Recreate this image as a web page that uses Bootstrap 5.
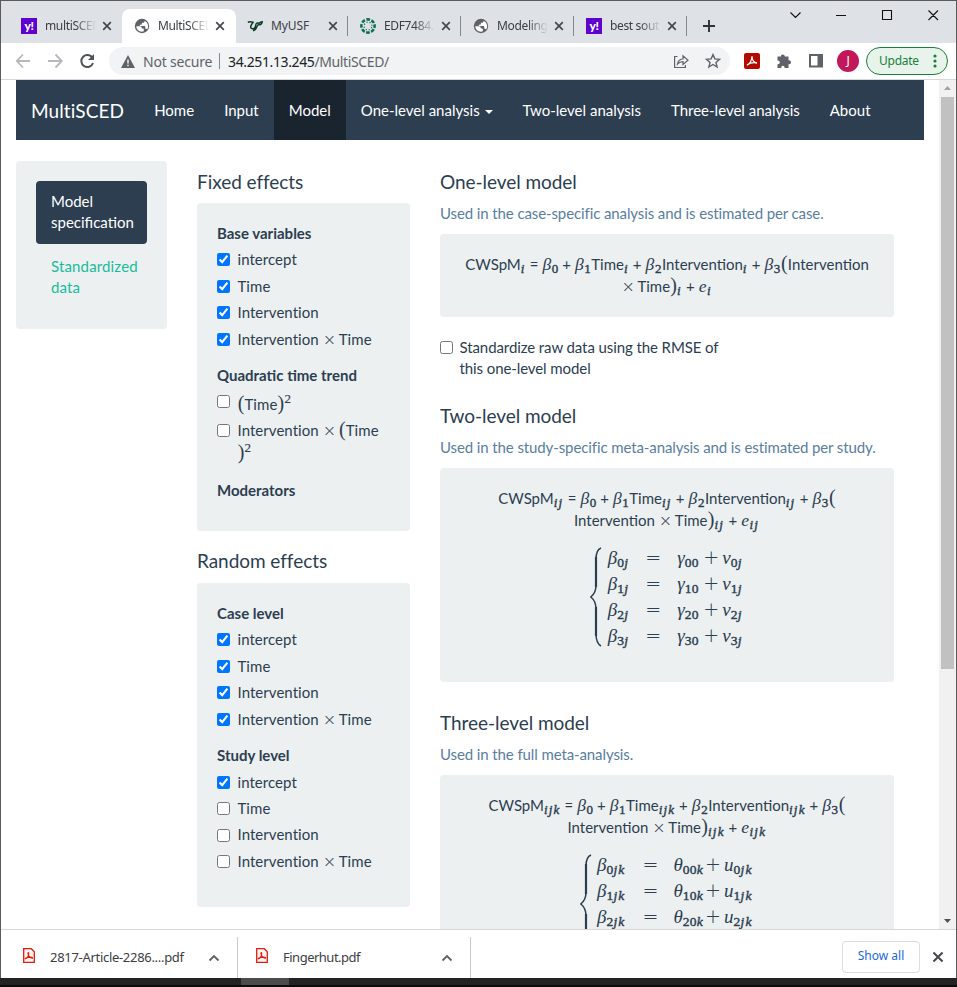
<!DOCTYPE html>
<html lang="en">
<head>
<meta charset="utf-8">
<title>MultiSCED</title>
<link rel="stylesheet" href="https://cdn.jsdelivr.net/npm/bootstrap@5.3.0/dist/css/bootstrap.min.css">
<style>
body{height:987px;overflow:hidden;background:#fff;font-family:"Noto Sans","Open Sans",sans-serif;font-size:12px;color:#3c4043}
svg{display:block;flex:none}
.win{height:978px;border:1px solid #5a5a5a;border-bottom:0}
.strip{height:42px;background:#dee1e6;padding-left:8px;flex:none}
.tab{width:113px;height:34px;padding-left:12px;margin-top:8px;position:relative}
.tab .ttl{width:51px;margin-left:8px;overflow:hidden;white-space:nowrap;letter-spacing:-.35px;-webkit-mask-image:linear-gradient(90deg,#000 60%,transparent);mask-image:linear-gradient(90deg,#000 60%,transparent)}
.tab .ttl.full{-webkit-mask-image:none;mask-image:none;letter-spacing:-.1px}
.tab .cls{margin-left:6px}
.tab.sep::after{content:"";position:absolute;right:0;top:7px;width:1px;height:20px;background:#85888c}
.tab.on{background:#fff;border-radius:8px 8px 0 0;width:114px;margin-right:-1px;padding-left:12px}
.fav-y{width:16px;height:16px;background:#5f01d1;color:#fff;font:900 12px/15px Lato,sans-serif;letter-spacing:-.3px;text-align:center;flex:none}
.tools{height:36px;background:#fff;flex:none;padding:0 8px 0 15px}
.omni{width:622px;height:28px;border-radius:14px;background:#f1f3f4;margin-left:13px;padding:0 9px 0 12px;font-size:14px;color:#5f6368}
.omni .ns{letter-spacing:-.2px;margin-left:8px;width:68px;white-space:nowrap}
.omni .bar{width:1px;height:16px;background:#85888c;margin:0 8px}
.omni .url{letter-spacing:-.38px;white-space:nowrap}
.omni .url b{font-weight:400;color:#202124}
.ava{width:22px;height:22px;background:#c2185b;color:#fff;font-size:12px;line-height:22px;text-align:center;margin-left:13px}
.upd{width:82px;height:28px;border:1.5px solid #188038;border-radius:14px;background:#e8f3ec;color:#188038;margin-left:7px;padding:0 10px 0 12px;letter-spacing:-.3px}
.view{height:850px;border-top:1px solid #d5d7d9;overflow:hidden;flex:none;font-family:Lato,sans-serif;font-size:15px;line-height:21.43px;color:#2c3e50}
.page{width:938px;padding-left:15px;height:849px;overflow:hidden}
.sbar{width:17px;background:#f1f1f1;padding:6px 2px 6px 2px}
.sbar .thumb{width:13px;height:572px;background:#c1c1c1;margin-top:7px}
.topnav{width:908px;height:60px;background:#2c3e50;color:#fff}
.topnav a{color:#fff;text-decoration:none;padding:19.5px 15px;height:60px;white-space:nowrap}
.topnav a.brandname{font-size:19px;padding-left:15px;padding-right:15px;letter-spacing:.1px}
.topnav a.cur{background:#1a242f}
.caret{display:inline-block;border:4px solid transparent;border-top-color:#fff;border-bottom:0;vertical-align:middle;margin-left:1px}
.cols{padding-top:21px;gap:30px}
.well{background:#ecf0f1;border-radius:4px;padding:20px}
.side{width:151px;height:168px}
.side a{display:block;padding:10px 15px;text-decoration:none;color:#18bc9c;border-radius:4px;margin-bottom:2px;letter-spacing:.15px}
.side a.cur{background:#2c3e50;color:#fff;padding-right:10px;letter-spacing:0}
.left{width:213px}
.right{width:454px}
.ttl4{font-size:19px;line-height:21px;font-weight:400;margin:10px 0 11px;letter-spacing:-.05px}
.hlp{color:#597ea2;margin-bottom:9.6px;letter-spacing:-.105px}
.std{letter-spacing:-.09px}
.grp{font-weight:700;height:21.4px;margin-bottom:2.4px}
.grp.nx{margin-top:12.8px}
.ck{display:flex;height:26.43px;align-items:center;letter-spacing:.05px}
.ck input,.std input{width:13px;height:13px;margin:0 7.5px 0 0;flex:none}
.std input{margin-right:6.5px}
.ck span.lb{white-space:nowrap}
.ck.q1{height:29px;align-items:flex-start;padding-top:5px}
.ck.q2{height:50px;align-items:flex-start;padding-top:1px;line-height:23px}
.ck.q1 input{margin-top:.5px}.ck.q2 input{margin-top:5px}
.tm{font-family:"DejaVu Sans","Liberation Serif",serif;font-weight:200;font-size:16px;display:inline-block;width:12px;text-align:center;margin:0 4px;line-height:1}
.pr{font-family:"Liberation Serif",serif;font-size:20px;display:inline-block;width:7px;text-align:center;line-height:15px}
.ex{font-family:"Liberation Serif",serif;font-size:13px;position:relative;top:-7px;line-height:1;-webkit-text-stroke:.2px}
.fx{text-align:center;white-space:nowrap}
.fx div{height:22px;line-height:22px}
.fx div:first-child{margin-top:-1px}
.fx i,.mx i{font-family:"Liberation Serif",serif;font-size:17.5px;display:inline-block;line-height:1}
.fx i.b{width:10px}.fx i.e{width:9px;text-align:center}
.fx sub,.mx sub{font-family:"Liberation Serif",serif;font-size:13px;-webkit-text-stroke:.4px;bottom:auto;top:3px;line-height:0;display:inline-block;vertical-align:baseline;text-align:left}
.fx sub.n{width:7px}
.fx sub.x1{width:5.5px}.fx sub.x2{width:10.5px}.fx sub.x3{width:17px}
.fx sub[class^=x],.mx sub em{font-style:italic;letter-spacing:1.2px}
.op{display:inline-block;width:15.5px;text-align:center}
.mx{display:grid;grid-auto-rows:26px;line-height:26px;white-space:nowrap;align-items:center}
.mx i{font-size:19px}.mx sub{font-size:13.5px;letter-spacing:.2px}
.mx .o{font-family:"DejaVu Sans",sans-serif;font-weight:200;font-size:19px;text-align:left;line-height:1;margin-left:-1px}
.dl{height:48px;flex:none;border-top:1px solid #d5d7d9;font-size:13px}
.dl .itm{height:41px;margin-top:7px;border-right:1px solid #c8cacc;padding-right:17px;letter-spacing:-.3px}
.dl .itm+.itm{letter-spacing:-.5px}
.shall{width:78px;height:32px;border:1px solid #dadce0;border-radius:4px;color:#1a67e0;font-size:12px;line-height:28px;text-align:center}
.task{height:9px;background:#232323;border-bottom:2px solid #0c0c0c}
.task div{height:7px;flex:none}
</style>
<script src="https://cdn.jsdelivr.net/npm/bootstrap@5.3.0/dist/js/bootstrap.bundle.min.js"></script>
</head>
<body>
<svg width="0" height="0" class="position-absolute">
<symbol id="x" viewBox="0 0 10 10"><path d="M1.200 1.200l7.600 7.600M8.800 1.200L1.200 8.800" stroke="#45494d" stroke-width="1.700" fill="none"/></symbol>
<symbol id="globe" viewBox="0 0 16 16"><circle cx="8" cy="8" r="7.200" fill="#5f6368"/><path d="M2.400 8.200h3.400c1.500 0 2 .8 2 1.900h1.300c.6 0 .9.400.9 1v1.200c0 .7-.6 1.300-1.900 1.400C4.800 13.700 2.300 11.200 2.400 8.200zM7.200 2.500h3.300v.900c0 .8-.6 1.300-1.300 1.300H8v1.200c0 .6-.4 1-1 1H6v1.300h4.300c.8 0 1.200.5 1.200 1.200v.9h.9c1.300-2.200 1.200-4.700-.3-6.300" fill="none"/><path d="M2.300 8.300H6c1.200 0 1.700.8 1.700 1.600v.7h1.100c.6 0 1 .4 1 1v1.700c-.6.300-1.200.4-1.800.4-3.200 0-5.700-2.400-5.700-5.400zM10.600 2.900c0 1.200-.7 1.800-1.600 1.800H7.900v1c0 .7-.5 1.100-1.200 1.100H5.800v1.300h4.300c.8 0 1.200.5 1.200 1.200v1.500h.8c.5 0 .9.300 1.100.700.7-1 1-2.100.9-3.400-.1-2.300-1.400-4.300-3.400-5.200z" fill="#fff"/></symbol>
<symbol id="pdf" viewBox="0 0 12 15"><path d="M.7.7h7.600L11.300 3.700v10.600H.7z" fill="#fff5f4" stroke="#e8190c" stroke-width="1.300"/><path d="M2.500 10.800c1.500 0 3.500-3.500 3.200-5.600-.1-1-1.200-.6-.8.400.6 2 2.300 4.400 4.200 4.700.7 0 .6-1-.3-1.100-1.800-.3-4.200.2-5.900.9-.9.500-1 .9-.4.700z" fill="none" stroke="#e8190c" stroke-width="1.100"/></symbol>
</svg>
<div class="win d-flex flex-column">
  <div class="strip d-flex">
    <div class="tab d-flex align-items-center"><div class="fav-y">y!</div><div class="ttl">multiSCED</div><svg class="cls" width="10" height="10"><use href="#x"/></svg></div>
    <div class="tab on d-flex align-items-center"><svg width="16" height="16"><use href="#globe"/></svg><div class="ttl">MultiSCED</div><svg class="cls" width="10" height="10"><use href="#x"/></svg></div>
    <div class="tab sep d-flex align-items-center"><svg width="16" height="16" viewBox="0 0 16 16"><path d="M.8 4.200c1.800-.6 3.700-.4 5.200.1L4.500 6.600c-1.300 2-1 3.700.8 4.200 2.400.3 3.300-2.500 3.600-4.300.3-1.800 2-1.600 3.300-1.300.8-.9 1.800-1.300 3-1.400-.2 1.300-.8 2.200-1.800 2.900-1.600-.5-2.600 0-3.200 1.300C9.300 10.700 8 12.400 6 12.800" fill="none" stroke="#0b3b25" stroke-width="1.500"/></svg><div class="ttl full">MyUSF</div><svg class="cls" width="10" height="10"><use href="#x"/></svg></div>
    <div class="tab sep d-flex align-items-center"><svg width="16" height="16" viewBox="0 0 16 16" fill="none" stroke="#0a7050"><circle cx="8" cy="8" r="6.600" stroke-width="2.600" stroke-dasharray="3.700 1.480" stroke-dashoffset="1.850"/><circle cx="8" cy="8" r="3.900" stroke-width="1.200" stroke-dasharray="1.100 1.960" stroke-dashoffset="2"/></svg><div class="ttl">EDF7484.</div><svg class="cls" width="10" height="10"><use href="#x"/></svg></div>
    <div class="tab sep d-flex align-items-center"><svg width="16" height="16"><use href="#globe"/></svg><div class="ttl">Modeling</div><svg class="cls" width="10" height="10"><use href="#x"/></svg></div>
    <div class="tab sep d-flex align-items-center"><div class="fav-y">y!</div><div class="ttl">best sout</div><svg class="cls" width="10" height="10"><use href="#x"/></svg></div>
    <svg width="14" height="14" style="margin:18px 0 0 15px" viewBox="0 0 14 14"><path d="M7 1v12M1 7h12" stroke="#303336" stroke-width="1.900"/></svg>
    <svg class="ms-auto" width="168" height="28" viewBox="788 1 168 28" fill="none" stroke="#111" stroke-width="1.100"><path d="M790.500 12.500l5 5 5-5M836 15.500h10M882.500 10.500h9v9h-9zM928.500 10.500l9.500 9.500M938 10.500l-9.500 9.500"/></svg>
  </div>
  <div class="tools d-flex align-items-center">
    <svg width="80" height="18" viewBox="16 52 80 18" fill="none" stroke-width="1.800"><path d="M30 61H17M23 54.500L16.800 61l6.200 6.500M48 61h13.500M55.500 54.500L61.800 61l-6.300 6.500" stroke="#b6b9bc"/><path d="M92.500 58a6 6 0 1 0 .5 5" stroke="#4f5357" stroke-width="2"/><path d="M94 54v6h-6z" fill="#4f5357"/></svg>
    <div class="omni d-flex align-items-center">
      <svg width="14" height="13" viewBox="0 0 14 13"><path d="M7 0l7 13H0z" fill="#5f6368"/><path d="M7 4.500v4M7 9.700v1.600" stroke="#f1f3f4" stroke-width="1.500"/></svg>
      <span class="ns">Not secure</span><span class="bar"></span><span class="url"><b>34.251.13.245</b>/MultiSCED/</span>
      <svg class="ms-auto" width="48" height="16" viewBox="0 0 48 16" fill="none" stroke="#5f6368" stroke-width="1.200"><path d="M4.500 3.500H1.600v11h10.800v-2.500M4.500 11c.5-3 2.300-5 5.500-5V2.800L15 7.200l-5 4.300V8.700c-2.500 0-4 .6-5.500 2.300z"/><path d="M40 1.600l1.900 4.300 4.600.4-3.500 3.100 1.100 4.600-4.100-2.500-4.100 2.500L37 9.400l-3.500-3.100 4.600-.4z" stroke-width="1.400"/></svg>
    </div>
    <svg style="margin-left:14px" width="80" height="16" viewBox="0 0 80 16"><rect width="16" height="16" rx="2" fill="#b30b00"/><path d="M3 12c2.500-.5 5-4.500 5-8.800C8 7 9.500 9.500 13 10 9.500 9.300 6 9.800 3 12z" fill="none" stroke="#fff" stroke-width="1.300"/><path d="M33.500 3.500h3.300a2 2 0 0 1 4 0h3.700v3.800h.6a1.900 1.900 0 0 1 0 3.900h-.6V15h-3.900v-.5a1.700 1.700 0 0 0-3.400 0v.5h-3.700v-3.800h.5a1.800 1.800 0 0 0 0-3.600h-.5z" fill="#5f6368"/><path d="M65 1h14v13.500H65zM67 3v9.500h6.500V3z" fill="#5f6368" fill-rule="evenodd"/></svg>
    <div class="ava rounded-circle">J</div>
    <div class="upd d-flex align-items-center justify-content-between"><span>Update</span><svg width="4" height="14" viewBox="0 0 4 14" fill="#188038"><circle cx="2" cy="2" r="1.600"/><circle cx="2" cy="7" r="1.600"/><circle cx="2" cy="12" r="1.600"/></svg></div>
  </div>
  <div class="view d-flex">
    <div class="page">
      <nav class="topnav d-flex">
        <a class="brandname" href="#">MultiSCED</a><a href="#">Home</a><a href="#">Input</a><a class="cur" href="#">Model</a><a href="#">One-level analysis <span class="caret"></span></a><a href="#">Two-level analysis</a><a href="#">Three-level analysis</a><a href="#">About</a>
      </nav>
      <div class="cols d-flex align-items-start">
        <div class="well side"><a class="cur" href="#">Model specification</a><a href="#">Standardized data</a></div>
        <div class="left">
          <h4 class="ttl4">Fixed effects</h4>
          <div class="well" style="height:328px">
            <div class="grp">Base variables</div>
            <label class="ck"><input type="checkbox" checked><span class="lb">intercept</span></label>
            <label class="ck"><input type="checkbox" checked><span class="lb">Time</span></label>
            <label class="ck"><input type="checkbox" checked><span class="lb">Intervention</span></label>
            <label class="ck"><input type="checkbox" checked><span class="lb">Intervention<span class="tm">×</span>Time</span></label>
            <div class="grp nx">Quadratic time trend</div>
            <label class="ck q1"><input type="checkbox"><span class="lb"><span class="pr">(</span>Time<span class="pr">)</span><span class="ex">2</span></span></label>
            <label class="ck q2"><input type="checkbox"><span class="lb">Intervention<span class="tm">×</span><span class="pr">(</span>Time<br><span class="pr">)</span><span class="ex">2</span></span></label>
            <div class="grp" style="margin-top:12px">Moderators</div>
          </div>
          <h4 class="ttl4" style="margin-top:19px;margin-bottom:12px">Random effects</h4>
          <div class="well" style="height:324px">
            <div class="grp">Case level</div>
            <label class="ck"><input type="checkbox" checked><span class="lb">intercept</span></label>
            <label class="ck"><input type="checkbox" checked><span class="lb">Time</span></label>
            <label class="ck"><input type="checkbox" checked><span class="lb">Intervention</span></label>
            <label class="ck"><input type="checkbox" checked><span class="lb">Intervention<span class="tm">×</span>Time</span></label>
            <div class="grp nx">Study level</div>
            <label class="ck"><input type="checkbox" checked><span class="lb">intercept</span></label>
            <label class="ck"><input type="checkbox"><span class="lb">Time</span></label>
            <label class="ck"><input type="checkbox"><span class="lb">Intervention</span></label>
            <label class="ck"><input type="checkbox"><span class="lb">Intervention<span class="tm">×</span>Time</span></label>
          </div>
        </div>
        <div class="right">
          <h4 class="ttl4">One-level model</h4>
          <div class="hlp">Used in the case-specific analysis and is estimated per case.</div>
          <div class="well fx" style="height:83px">
            <div>CWSpM<sub class="x1">i</sub><span class="op">=</span><i class="b">β</i><sub class="n">0</sub><span class="op">+</span><i class="b">β</i><sub class="n">1</sub>Time<sub class="x1">i</sub><span class="op">+</span><i class="b">β</i><sub class="n">2</sub>Intervention<sub class="x1">i</sub><span class="op">+</span><i class="b">β</i><sub class="n">3</sub><span class="pr">(</span>Intervention</div>
            <div><span class="tm" style="margin-left:0">×</span>Time<span class="pr">)</span><sub class="x1">i</sub><span class="op">+</span><i class="e">e</i><sub class="x1">i</sub></div>
          </div>
          <label class="std d-flex align-items-start" style="margin-top:20px;width:290px"><input type="checkbox" style="margin-top:4px"><span>Standardize raw data using the RMSE of this one-level model</span></label>
          <h4 class="ttl4" style="margin-top:25px">Two-level model</h4>
          <div class="hlp">Used in the study-specific meta-analysis and is estimated per study.</div>
          <div class="well fx" style="height:214px">
            <div>CWSpM<sub class="x2">ij</sub><span class="op">=</span><i class="b">β</i><sub class="n">0</sub><span class="op">+</span><i class="b">β</i><sub class="n">1</sub>Time<sub class="x2">ij</sub><span class="op">+</span><i class="b">β</i><sub class="n">2</sub>Intervention<sub class="x2">ij</sub><span class="op">+</span><i class="b">β</i><sub class="n">3</sub><span class="pr">(</span></div>
            <div>Intervention<span class="tm">×</span>Time<span class="pr">)</span><sub class="x2">ij</sub><span class="op">+</span><i class="e">e</i><sub class="x2">ij</sub></div>
            <section class="d-flex justify-content-center text-start" style="margin-top:16px">
              <svg width="18" height="102" viewBox="0 0 18 102" fill="none" stroke="#2c3e50"><path d="M11 1Q6 3 6 12V38Q6 46 .8 50Q6 54 6 62V87Q6 96 11 99" stroke-width="1.500"/><path d="M6 10V40M6 60V89" stroke-width="2.200"/></svg>
              <div class="mx" style="grid-template-columns:38.500px 31px 27px 18px 22px;margin-top:-2px">
                <span><i>β</i><sub>0<em>j</em></sub></span><span class="o">=</span><span><i>γ</i><sub>00</sub></span><span class="o">+</span><span><i>v</i><sub>0<em>j</em></sub></span>
                <span><i>β</i><sub>1<em>j</em></sub></span><span class="o">=</span><span><i>γ</i><sub>10</sub></span><span class="o">+</span><span><i>v</i><sub>1<em>j</em></sub></span>
                <span><i>β</i><sub>2<em>j</em></sub></span><span class="o">=</span><span><i>γ</i><sub>20</sub></span><span class="o">+</span><span><i>v</i><sub>2<em>j</em></sub></span>
                <span><i>β</i><sub>3<em>j</em></sub></span><span class="o">=</span><span><i>γ</i><sub>30</sub></span><span class="o">+</span><span><i>v</i><sub>3<em>j</em></sub></span>
              </div>
            </section>
          </div>
          <h4 class="ttl4" style="margin-top:30px">Three-level model</h4>
          <div class="hlp">Used in the full meta-analysis.</div>
          <div class="well fx" style="height:240px">
            <div>CWSpM<sub class="x3">ijk</sub><span class="op">=</span><i class="b">β</i><sub class="n">0</sub><span class="op">+</span><i class="b">β</i><sub class="n">1</sub>Time<sub class="x3">ijk</sub><span class="op">+</span><i class="b">β</i><sub class="n">2</sub>Intervention<sub class="x3">ijk</sub><span class="op">+</span><i class="b">β</i><sub class="n">3</sub><span class="pr">(</span></div>
            <div>Intervention<span class="tm">×</span>Time<span class="pr">)</span><sub class="x3">ijk</sub><span class="op">+</span><i class="e">e</i><sub class="x3">ijk</sub></div>
            <section class="d-flex justify-content-center text-start" style="margin-top:16px">
              <svg width="17" height="102" viewBox="0 0 17 102" fill="none" stroke="#2c3e50"><path d="M11 1Q6 3 6 12V38Q6 46 .8 50Q6 54 6 62V87Q6 96 11 99" stroke-width="1.500"/><path d="M6 10V40M6 60V89" stroke-width="2.200"/></svg>
              <div class="mx" style="grid-template-columns:46.500px 30px 32.500px 18px 30px;margin-top:-2px">
                <span><i>β</i><sub>0<em>jk</em></sub></span><span class="o">=</span><span><i>θ</i><sub>00<em>k</em></sub></span><span class="o">+</span><span><i>u</i><sub>0<em>jk</em></sub></span>
                <span><i>β</i><sub>1<em>jk</em></sub></span><span class="o">=</span><span><i>θ</i><sub>10<em>k</em></sub></span><span class="o">+</span><span><i>u</i><sub>1<em>jk</em></sub></span>
                <span><i>β</i><sub>2<em>jk</em></sub></span><span class="o">=</span><span><i>θ</i><sub>20<em>k</em></sub></span><span class="o">+</span><span><i>u</i><sub>2<em>jk</em></sub></span>
              </div>
            </section>
          </div>
        </div>
      </div>
    </div>
    <div class="sbar d-flex flex-column align-items-center">
      <svg width="7" height="4" viewBox="0 0 7 4"><path d="M0 4L3.500 0 7 4z" fill="#a3a3a3"/></svg>
      <div class="thumb"></div>
      <svg class="mt-auto" width="7" height="4" viewBox="0 0 7 4"><path d="M0 0h7L3.500 4z" fill="#505050"/></svg>
    </div>
  </div>
  <div class="dl d-flex">
    <div class="itm d-flex align-items-center" style="width:237px;padding-left:22px"><svg class="mb-1" width="12" height="15"><use href="#pdf"/></svg><span style="margin-left:15px">2817-Article-2286....pdf</span><svg class="ms-auto" width="12" height="8" viewBox="0 0 12 8"><path d="M1.500 6.500L6 2l4.500 4.500" fill="none" stroke="#5f6368" stroke-width="1.900"/></svg></div>
    <div class="itm d-flex align-items-center" style="width:233px;padding-left:18px"><svg class="mb-1" width="12" height="15"><use href="#pdf"/></svg><span style="margin-left:15px">Fingerhut.pdf</span><svg class="ms-auto" width="12" height="8" viewBox="0 0 12 8"><path d="M1.500 6.500L6 2l4.500 4.500" fill="none" stroke="#5f6368" stroke-width="1.900"/></svg></div>
    <div class="d-flex align-items-center ms-auto" style="padding:6px 12px 0 0"><div class="shall">Show all</div><svg style="margin-left:12px" width="12" height="12" viewBox="0 0 10 10"><use href="#x"/></svg></div>
  </div>
</div>
<div class="task d-flex"><div style="margin-left:241px;width:48px;background:#4c4c4c"></div></div>
</body>
</html>
